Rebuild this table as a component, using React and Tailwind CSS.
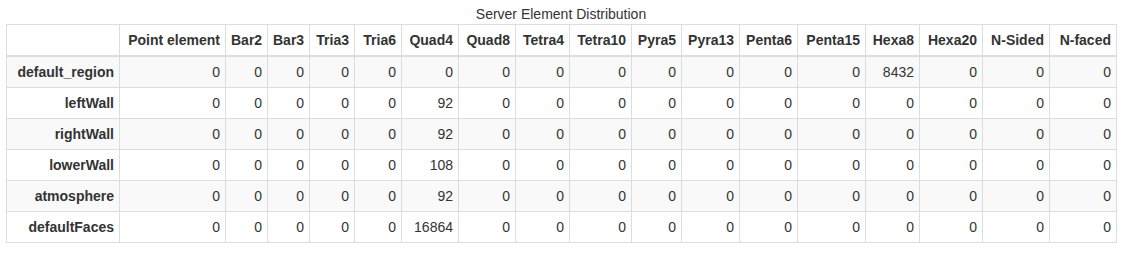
const columns = [
  'Point element', 'Bar2', 'Bar3', 'Tria3', 'Tria6', 'Quad4', 'Quad8', 'Tetra4', 'Tetra10',
  'Pyra5', 'Pyra13', 'Penta6', 'Penta15', 'Hexa8', 'Hexa20', 'N-Sided', 'N-faced',
]

const widths = [113, 106, 42, 42, 45, 47, 57, 57, 54, 62, 50, 58, 58, 68, 54, 63, 67, 67]

const zeros = (n) => Array(n).fill(0)

const rows = [
  { name: 'default_region', values: [...zeros(13), 8432, 0, 0, 0] },
  { name: 'leftWall', values: [0, 0, 0, 0, 0, 92, ...zeros(11)] },
  { name: 'rightWall', values: [0, 0, 0, 0, 0, 92, ...zeros(11)] },
  { name: 'lowerWall', values: [0, 0, 0, 0, 0, 108, ...zeros(11)] },
  { name: 'atmosphere', values: [0, 0, 0, 0, 0, 92, ...zeros(11)] },
  { name: 'defaultFaces', values: [0, 0, 0, 0, 0, 16864, ...zeros(11)] },
]

function App() {
  return (
    <div className="w-[1131px] h-[260px] bg-white text-[#333] font-['Liberation_Sans',Arial,sans-serif] text-[14px] leading-[20px]">
      <div className="pt-[4px] pl-[6px] w-[1116px]">
        <div className="text-center text-[14px] leading-[20px] text-[#333]">Server Element Distribution</div>
        <table className="table-fixed border-collapse w-[1110px]">
          <colgroup>
            {widths.map((w, i) => (
              <col key={i} style={{ width: w }} />
            ))}
          </colgroup>
          <thead>
            <tr>
              <th className="border border-[#ddd] border-b-2 px-[5px] py-[5px]"></th>
              {columns.map(c => (
                <th key={c} className="border border-[#ddd] border-b-2 px-[5px] py-[5px] text-right font-bold whitespace-nowrap">
                  {c}
                </th>
              ))}
            </tr>
          </thead>
          <tbody>
            {rows.map((r, i) => (
              <tr key={r.name} className={i % 2 === 0 ? 'bg-[#f9f9f9]' : 'bg-white'}>
                <th className="border border-[#ddd] px-[5px] py-[5px] text-right font-bold whitespace-nowrap">{r.name}</th>
                {r.values.map((v, j) => (
                  <td key={j} className="border border-[#ddd] px-[5px] py-[5px] text-right">{v}</td>
                ))}
              </tr>
            ))}
          </tbody>
        </table>
      </div>
    </div>
  )
}

export default App
